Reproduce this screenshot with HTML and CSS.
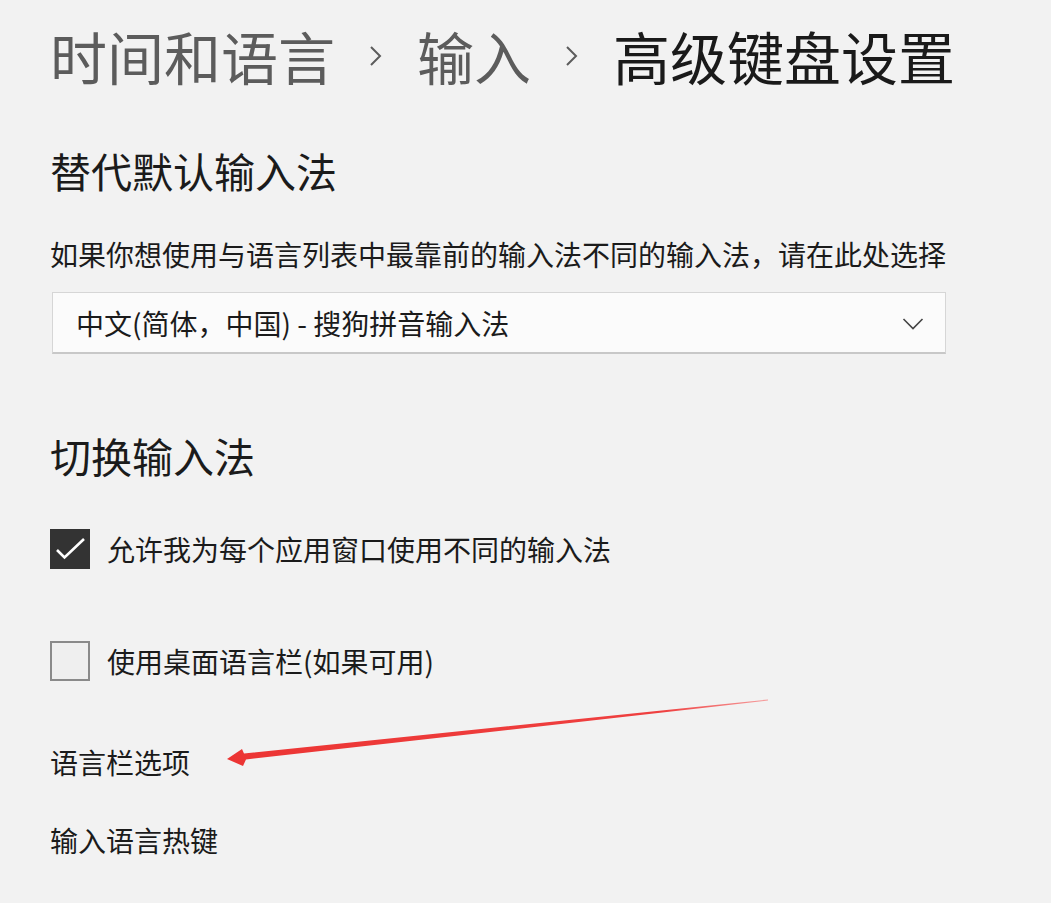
FILE: index.html
```html
<!DOCTYPE html>
<html lang="zh-CN">
<head>
<meta charset="utf-8">
<title>高级键盘设置</title>
<link rel="stylesheet" href="styles.css">
</head>
<body>
<main class="page">
  <h1 class="crumbs">
    <span class="crumb">时间和语言</span>
    <svg class="sep" width="14" height="22" viewBox="0 0 14 22"><path d="M2 2 L11 11 L2 20" fill="none" stroke="#5c5c5c" stroke-width="2"/></svg>
    <span class="crumb">输入</span>
    <svg class="sep" width="14" height="22" viewBox="0 0 14 22"><path d="M2 2 L11 11 L2 20" fill="none" stroke="#5c5c5c" stroke-width="2"/></svg>
    <span class="crumb current">高级键盘设置</span>
  </h1>

  <h2 class="heading first">替代默认输入法</h2>
  <p class="desc">如果你想使用与语言列表中最靠前的输入法不同的输入法，请在此处选择</p>
  <div class="select">
    <span class="select-text">中文(简体，中国) - 搜狗拼音输入法</span>
    <svg class="select-chev" width="22" height="14" viewBox="0 0 22 14"><path d="M1.5 2 L11 11.5 L20.5 2" fill="none" stroke="#444" stroke-width="1.6"/></svg>
  </div>

  <h2 class="heading second">切换输入法</h2>
  <div class="check-row row1">
    <span class="box checked">
      <svg width="40" height="40" viewBox="0 0 40 40"><path d="M7 21 L14.5 28.5 L34 10" fill="none" stroke="#fff" stroke-width="2.6"/></svg>
    </span>
    <span class="check-label">允许我为每个应用窗口使用不同的输入法</span>
  </div>
  <div class="check-row row2">
    <span class="box"></span>
    <span class="check-label">使用桌面语言栏(如果可用)</span>
  </div>

  <div class="link link1">语言栏选项</div>
  <div class="link link2">输入语言热键</div>

  <svg class="arrow" width="1051" height="903" viewBox="0 0 1051 903">
    <defs>
      <linearGradient id="fade" x1="228" y1="0" x2="770" y2="0" gradientUnits="userSpaceOnUse">
        <stop offset="0" stop-color="#ec3534"/>
        <stop offset="0.8" stop-color="#ef4040"/>
        <stop offset="1" stop-color="#f6a0a0"/>
      </linearGradient>
    </defs>
    <polygon points="227,759 242,749 244,753.5 768,699.5 768,700.5 246,759.5 243,766" fill="url(#fade)"/>
  </svg>
</main>
</body>
</html>
```

FILE: styles.css
```css
* { box-sizing: border-box; }
html, body {
  margin: 0;
  padding: 0;
  background: #f2f2f2;
}
body {
  font-family: "Noto Sans CJK SC", "Noto Sans", sans-serif;
  color: #1b1b1b;
  width: 1051px;
  height: 903px;
  overflow: hidden;
}
.page {
  position: relative;
  padding: 20px 0 0 50px;
  height: 903px;
}
.crumbs {
  margin: 0;
  display: flex;
  align-items: center;
  font-weight: normal;
  font-size: 57px;
  line-height: 70px;
  height: 70px;
  color: #5c5c5c;
}
.sep {
  margin: 2px 34px 0 34px;
  flex: none;
}
.crumb.current { color: #1a1a1a; }

.heading {
  margin: 0;
  font-weight: normal;
  font-size: 41px;
  line-height: 50px;
  color: #1b1b1b;
}
.heading.first { margin-top: 55px; }
.heading.second { margin-top: 76px; }

.desc {
  margin: 39px 0 0;
  font-size: 28px;
  line-height: 40px;
  color: #1b1b1b;
}
.select {
  margin-top: 18px;
  margin-left: 2px;
  width: 894px;
  height: 62px;
  background: #fbfbfb;
  border: 1px solid #d6d6d6;
  border-bottom: 2px solid #c8c8c8;
  display: flex;
  align-items: center;
  justify-content: space-between;
  padding: 0 21px 0 23px;
}
.select-text {
  font-size: 28px;
  line-height: 40px;
  color: #1b1b1b;
}
.select-chev { margin-top: 2px; }

.check-row {
  display: flex;
  align-items: center;
  height: 40px;
}
.row1 { margin-top: 49px; }
.row2 { margin-top: 72px; }
.box {
  width: 40px;
  height: 40px;
  flex: none;
  border: 2px solid #8a8a8a;
  background: #efefef;
}
.box.checked {
  background: #333333;
  border: none;
}
.box svg { display: block; }
.check-label {
  margin-left: 17px;
  font-size: 28px;
  line-height: 40px;
  color: #1b1b1b;
}
.link {
  font-size: 28px;
  line-height: 40px;
  color: #1b1b1b;
}
.link1 { margin-top: 61px; }
.link2 { margin-top: 38px; }

.arrow {
  position: absolute;
  left: 0;
  top: 0;
  pointer-events: none;
}
```
